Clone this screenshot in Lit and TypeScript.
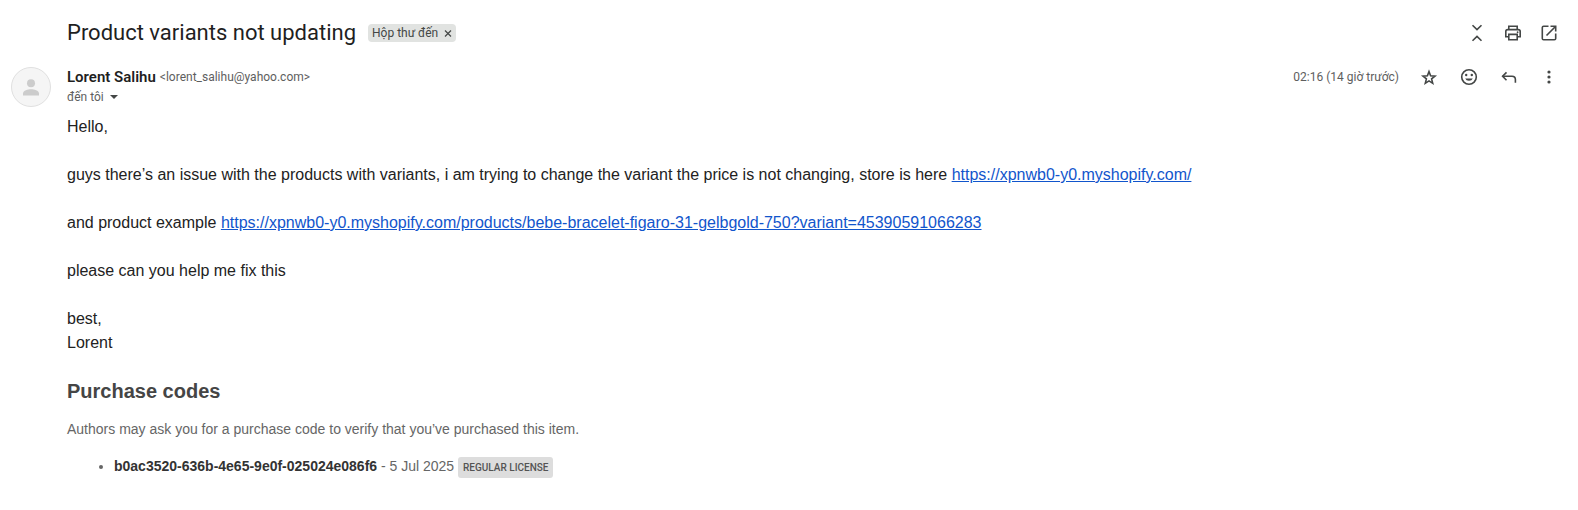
import { LitElement, html, css, svg } from "lit";
import { customElement } from "lit/decorators.js";

const line = (d: string) =>
  svg`<path d=${d} fill="none" stroke="currentColor" stroke-width="1.6"></path>`;

const icons = {
  collapse: line("M5.5 2.2 10 6.6 14.5 2.2M5.5 17.8 10 13.4 14.5 17.8"),
  print: svg`${line("M5.8 6.3V3.3H14.2V6.3M5.8 13.8H2.8V8.6Q2.8 6.6 4.8 6.6H15.2Q17.2 6.6 17.2 8.6V13.8H14.2M5.8 11.4H14.2V16.7H5.8Z")}<circle cx="14.6" cy="9.2" r=".9" fill="currentColor"></circle>`,
  open: svg`${line("M9.5 3.3H4.6Q3.3 3.3 3.3 4.6V15.4Q3.3 16.7 4.6 16.7H15.4Q16.7 16.7 16.7 15.4V10.5M7.5 12.5 16.5 3.5")}${line("M11.5 3.3H16.7V8.5")}`,
  star: line("M10 4.6 11.6 8.8 16 9.1 12.6 11.9 13.7 16.3 10 13.9 6.3 16.3 7.4 11.9 4 9.1 8.4 8.8Z"),
  smile: svg`<circle cx="10" cy="10" r="7.3" fill="none" stroke="currentColor" stroke-width="1.6"></circle><circle cx="7.2" cy="8" r="1.2" fill="currentColor"></circle><circle cx="12.8" cy="8" r="1.2" fill="currentColor"></circle><path d="M6.2 11.5H13.8A4 3.4 0 0 1 6.2 11.5Z" fill="currentColor"></path>`,
  reply: svg`${line("M7.5 5.4 3.6 9.3 7.5 13.2")}${line("M3.6 9.3H13Q16.4 9.3 16.4 12.6V15.8")}`,
  more: svg`<circle cx="10" cy="5" r="1.6" fill="currentColor"></circle><circle cx="10" cy="10" r="1.6" fill="currentColor"></circle><circle cx="10" cy="15" r="1.6" fill="currentColor"></circle>`,
};

@customElement("app-root")
export class AppRoot extends LitElement {
  static styles = css`
    :host {
      display: block;
      background: #fff;
      color: #222;
      font-family: "Liberation Sans", Arial, sans-serif;
      font-size: 16px;
      line-height: 24px;
    }
    button {
      border: 0;
      padding: 0;
      background: none;
      color: inherit;
      font: inherit;
      cursor: pointer;
    }
    .page { padding: 19px 19px 24px 0; }
    .bar, .heading, .tools, .from, .recipients {
      display: flex;
      align-items: center;
    }
    .bar, .info { justify-content: space-between; }
    .bar { padding-left: 67px; }
    .ui { font-family: Roboto, sans-serif; }
    .heading { gap: 12px; }
    .subject {
      margin: 0;
      color: #1f1f1f;
      font-size: 22px;
      line-height: 28px;
      font-weight: 400;
    }
    .label {
      display: flex;
      gap: 6px;
      padding: 0 4px;
      border-radius: 4px;
      background: #e1e3e1;
      color: #444746;
      font-size: 12px;
      line-height: 18px;
    }
    .remove { display: flex; align-items: center; }
    .tools { gap: 16px; color: #444746; }
    .message-tools { gap: 20px; }
    .tool { display: flex; }
    .icon { width: 20px; height: 20px; }
    .message {
      display: grid;
      grid-template-columns: 56px minmax(0, 1fr);
      padding: 20px 0 0 11px;
    }
    .avatar {
      box-sizing: border-box;
      width: 40px;
      height: 40px;
      border: 1px solid #e0e0e0;
      border-radius: 50%;
      background: #f5f5f5;
    }
    .info {
      display: flex;
      align-items: flex-start;
      color: #5e5e5e;
      font-size: 12px;
      line-height: 20px;
    }
    .from { gap: 4px; }
    .name { margin: 0; color: #1f1f1f; font-size: 15px; font-weight: 600; line-height: 20px; }
    .recipients { gap: 6px; }
    .date { color: #5e5e5e; }
    .body { padding-top: 8px; }
    .text { margin: 0 0 24px; }
    .link { color: #15c; }
    .title { margin: 0 0 16px; color: #454545; font-size: 20px; line-height: 24px; }
    .note { margin: 0 0 15px; color: #666; font-size: 14px; line-height: 20px; }
    .codes { margin: 0; padding-left: 47px; color: #666; font-size: 14px; line-height: 24px; }
    .code { color: #333; }
    .license {
      display: inline-block;
      padding: 0 5px;
      border-radius: 3px;
      background: #ddd;
      color: #545454;
      font-family: Roboto, sans-serif;
      font-size: 10px;
      font-weight: 500;
      line-height: 21px;
    }
  `;

  private tool(name: keyof typeof icons, label: string) {
    return html`<button class="tool" aria-label=${label}>
      <svg class="icon" viewBox="0 0 20 20" aria-hidden="true">${icons[name]}</svg>
    </button>`;
  }

  render() {
    return html`
      <main class="page">
        <header class="bar">
          <div class="heading ui">
            <h1 class="subject">Product variants not updating</h1>
            <div class="label">
              <span>Hộp thư đến</span>
              <button class="remove" aria-label="Xóa nhãn">
                <svg width="8" height="8" viewBox="0 0 8 8" aria-hidden="true"><path d="M1 1.5 7 7.5M7 1.5 1 7.5" stroke="currentColor" stroke-width="1.2"></path></svg>
              </button>
            </div>
          </div>
          <div class="tools">
            ${this.tool("collapse", "Thu gọn tất cả")} ${this.tool("print", "In tất cả")}
            ${this.tool("open", "Trong cửa sổ mới")}
          </div>
        </header>
        <article class="message">
          <svg class="avatar" viewBox="0 0 38 38" aria-hidden="true">
            <circle cx="19" cy="15.3" r="4" fill="#ccc"></circle>
            <path d="M11 27.5V25.4C11 22.5 16 21.2 19 21.2S27 22.5 27 25.4V27.5Z" fill="#ccc"></path>
          </svg>
          <div>
            <div class="info ui">
              <div>
                <div class="from">
                  <h2 class="name">Lorent Salihu</h2>
                  <span>&lt;lorent_salihu@yahoo.com&gt;</span>
                </div>
                <button class="recipients">
                  <span>đến tôi</span>
                  <svg width="8" height="4" viewBox="0 0 8 4" aria-hidden="true"><path d="M0 0H8L4 4Z" fill="#444746"></path></svg>
                </button>
              </div>
              <div class="tools message-tools">
                <time class="date">02:16 (14 giờ trước)</time>
                ${this.tool("star", "Gắn dấu sao")} ${this.tool("smile", "Thêm biểu tượng cảm xúc")}
                ${this.tool("reply", "Trả lời")} ${this.tool("more", "Khác")}
              </div>
            </div>
            <div class="body">
              <p class="text">Hello,</p>
              <p class="text">
                guys there’s an issue with the products with variants, i am trying to change the variant the price is not changing, store is here
                <a class="link" href="https://xpnwb0-y0.myshopify.com/">https://xpnwb0-y0.myshopify.com/</a>
              </p>
              <p class="text">
                and product example
                <a class="link" href="https://xpnwb0-y0.myshopify.com/products/bebe-bracelet-figaro-31-gelbgold-750?variant=45390591066283">https://xpnwb0-y0.myshopify.com/products/bebe-bracelet-figaro-31-gelbgold-750?variant=45390591066283</a>
              </p>
              <p class="text">please can you help me fix this</p>
              <p class="text">best,<br />Lorent</p>
              <h3 class="title">Purchase codes</h3>
              <p class="note">Authors may ask you for a purchase code to verify that you’ve purchased this item.</p>
              <ul class="codes">
                <li>
                  <strong class="code">b0ac3520-636b-4e65-9e0f-025024e086f6</strong> - 5 Jul 2025
                  <span class="license">REGULAR LICENSE</span>
                </li>
              </ul>
            </div>
          </div>
        </article>
      </main>
    `;
  }
}
